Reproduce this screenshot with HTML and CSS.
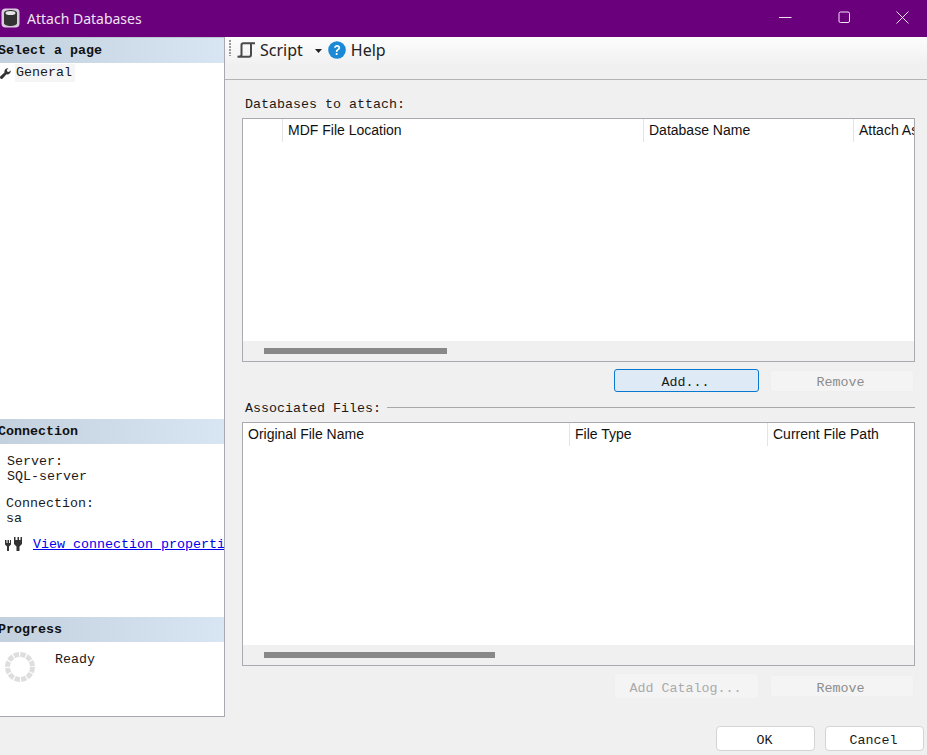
FILE: index.html
```html
<!DOCTYPE html>
<html lang="en">
<head>
<meta charset="utf-8">
<title>Attach Databases</title>
<link rel="stylesheet" href="styles.css">
</head>
<body>
<div class="window">
  <header class="titlebar">
    <svg class="app-icon" width="19" height="20" viewBox="0 0 19 20">
      <rect x="0.5" y="0.5" width="18" height="19" rx="4" fill="#d9cbdd"/>
      <path d="M3 5c0-4 13-4 13 0v10c0 4-13 4-13 0z" fill="#333"/>
      <ellipse cx="9.500" cy="5" rx="5" ry="2" fill="#e6e6e6"/>
    </svg>
    <span class="title">Attach Databases</span>
    <div class="win-controls">
      <span class="win-btn"><svg width="13" height="13" viewBox="0 0 13 13"><path d="M0 6.500h12.500" stroke="#f2e6f4" stroke-width="1"/></svg></span>
      <span class="win-btn"><svg width="13" height="13" viewBox="0 0 13 13"><rect x="1" y="1" width="10.500" height="10.500" rx="1.500" fill="none" stroke="#f2e6f4" stroke-width="1"/></svg></span>
      <span class="win-btn"><svg width="13" height="13" viewBox="0 0 13 13"><path d="M0.500 0.500l12 12M12.500 0.500l-12 12" stroke="#f2e6f4" stroke-width="1"/></svg></span>
    </div>
  </header>
  <div class="body">
    <aside class="side">
      <section class="side-sec sec-pages">
        <h2 class="sec-head">Select a page</h2>
        <div class="page-row">
          <svg class="wrench" width="11" height="11" viewBox="0 0 11 11"><path d="M10.800 2.400a3.600 3.600 0 0 1-4.300 3.900L2.700 10.500a1.600 1.600 0 0 1-2.300-2.200L4.500 4.500A3.600 3.600 0 0 1 8.400 0.200L6.800 2.100l0.400 1.500 1.500 0.400z" fill="#333"/></svg>
          <span class="page-name">General</span>
        </div>
      </section>
      <section class="side-sec sec-conn">
        <h2 class="sec-head">Connection</h2>
        <div class="conn-block first">Server:<br>SQL-server</div>
        <div class="conn-block second">Connection:<br>sa</div>
        <div class="conn-link">
          <svg class="plug" width="19" height="16" viewBox="0 0 19 16"><path d="M1 4h1.500v3h1V4H5v3h1V4h1v4.500L5 10.500V15H3v-4.500L1 8.500zM10 1h1.500v3h2V1H15v3h1.500V1H18v7l-2.500 2.500V15h-3v-4.500L10 8z" fill="#333"/></svg>
          <a href="#" class="link">View connection properties</a>
        </div>
      </section>
      <section class="side-sec sec-prog">
        <h2 class="sec-head">Progress</h2>
        <div class="prog-row">
          <svg class="spinner" width="30" height="30" viewBox="0 0 30 30"><circle cx="15" cy="15" r="12.500" fill="none" stroke="#dedede" stroke-width="5" stroke-dasharray="5.300 1.240"/></svg>
          <span class="ready">Ready</span>
        </div>
      </section>
    </aside>
    <main class="main">
      <div class="toolbar">
        <span class="grip"></span>
        <svg class="script-icon" width="18" height="16" viewBox="0 0 18 16"><path d="M4.500 13V3C4.500 1.800 5.300 1.200 6.500 1.200H18M14 1.200V12.500C14 14 13.200 14.800 12 14.800H0.500C2 14.800 4.500 14.500 4.500 13" fill="none" stroke="#4a4a4a" stroke-width="2"/></svg>
        <span class="tool-text">Script</span>
        <svg class="caret" width="7" height="4" viewBox="0 0 7 4"><path d="M0 0h7L3.500 4z" fill="#222"/></svg>
        <svg class="help-icon" width="18" height="18" viewBox="0 0 19 19"><circle cx="9.500" cy="9.500" r="9.300" fill="#1b8ad6"/><path d="M6.500 7.200c0-4 6.300-3.700 6.300 0 0 2.500-2.800 2.400-2.800 4.300H8.300c0-3 2.700-2.900 2.700-4.400 0-1.500-2.700-1.500-2.700 0.100zM8.200 12.700H10v2H8.200z" fill="#fff"/></svg>
        <span class="tool-text">Help</span>
      </div>
      <div class="content">
        <div class="label">Databases to attach:</div>
        <div class="grid grid-top">
          <div class="grid-head">
            <span class="col c-check"></span>
            <span class="col c-mdf">MDF File Location</span>
            <span class="col c-dbname">Database Name</span>
            <span class="col c-attach">Attach As</span>
          </div>
          <div class="grid-rows"></div>
          <div class="hscroll"><span class="thumb thumb-top"></span></div>
        </div>
        <div class="btn-row row-add">
          <button class="btn btn-active">Add...</button>
          <button class="btn btn-disabled btn-remove">Remove</button>
        </div>
        <div class="assoc-label">
          <span class="label">Associated Files:</span>
          <span class="rule"></span>
        </div>
        <div class="grid grid-bottom">
          <div class="grid-head">
            <span class="col c-orig">Original File Name</span>
            <span class="col c-type">File Type</span>
            <span class="col c-path">Current File Path</span>
          </div>
          <div class="grid-rows"></div>
          <div class="hscroll"><span class="thumb thumb-bottom"></span></div>
        </div>
        <div class="btn-row row-catalog">
          <button class="btn btn-disabled btn-catalog">Add Catalog...</button>
          <button class="btn btn-disabled btn-remove">Remove</button>
        </div>
      </div>
      <div class="footer">
        <button class="btn btn-plain">OK</button>
        <button class="btn btn-plain">Cancel</button>
      </div>
    </main>
  </div>
</div>
</body>
</html>
```

FILE: styles.css
```css
* { box-sizing: border-box; }
html, body { margin: 0; padding: 0; height: 100%; overflow: hidden; }
body { background: #f0f0f0; font-family: "Liberation Mono", monospace; font-size: 13.33px; color: #1a1a1a; }
.window { width: 927px; height: 755px; display: flex; flex-direction: column; overflow: hidden; }

.titlebar { height: 37px; flex: none; background: #6a007c; display: flex; align-items: center; padding-left: 1px; padding-bottom: 1px; }
.app-icon { flex: none; }
.title { margin-left: 7px; font-family: "Noto Sans", sans-serif; font-size: 14px; color: #efe3f2; }
.win-controls { margin-left: auto; display: flex; margin-right: -5px; padding-bottom: 2px; }
.win-btn { width: 58.500px; height: 30px; display: flex; align-items: center; justify-content: center; }

.body { flex: 1; display: flex; min-height: 0; }
.side { width: 225px; height: 680px; flex: none; background: #fff; border-right: 1px solid #a9a9b0; border-bottom: 1px solid #a9a9b0; display: flex; flex-direction: column; overflow: hidden; }
.side-sec { flex: none; }
.sec-pages { height: 382px; }
.sec-conn { height: 198px; }
.sec-prog { flex: 1; }
.sec-head { margin: 0; height: 25px; padding-left: 0; font-size: 13.33px; font-weight: bold; line-height: 25px; text-indent: -2px; color: #111; background: linear-gradient(90deg, #c3d1df, #d8e5f2); white-space: nowrap; }
.sec-pages .sec-head { height: 26px; line-height: 26px; border-top: 1px solid #bcc6d2; }

.page-row { display: flex; align-items: center; height: 18px; margin-top: 1px; }
.wrench { margin-left: 0; flex: none; }
.page-name { margin-left: 4px; padding: 0 3px 0 1px; height: 18px; line-height: 18px; background: #f5f5f5; }

.conn-block { line-height: 15px; margin-left: 7px; }
.conn-block.first { margin-top: 10px; }
.conn-block.second { margin-top: 12px; margin-left: 6px; }
.conn-link { display: flex; align-items: center; margin-top: 9px; margin-left: 4px; white-space: nowrap; height: 18px; }
.plug { flex: none; }
.link { margin-left: 10px; color: #0000ee; text-decoration: underline; }

.prog-row { display: flex; align-items: flex-start; padding: 10px 0 0 5px; }
.ready { margin-left: 20px; line-height: 15px; }
.spinner { flex: none; }

.main { flex: 1; min-width: 0; display: flex; flex-direction: column; }
.toolbar { height: 43px; flex: none; border-bottom: 1px solid #b4b4b4; background: linear-gradient(#fdfdfd, #f0f0f0 70%); display: flex; align-items: flex-start; padding-left: 4px; padding-top: 3px; }
.grip { width: 2px; height: 16px; background: repeating-linear-gradient(#999 0 2px, transparent 2px 3px); flex: none; }
.script-icon { margin-left: 6px; margin-top: 2px; flex: none; }
.tool-text { font-family: "Noto Sans", sans-serif; font-size: 16px; line-height: 21px; margin-left: 5px; color: #222; }
.caret { margin-left: 12px; margin-top: 9px; flex: none; }
.help-icon { margin-left: 6px; margin-top: 1px; flex: none; }
.tool-text:last-child { margin-left: 5px; }

.content { padding: 16px 12px 0 17px; display: flex; flex-direction: column; }
.label { line-height: 16px; margin-left: 3px; position: relative; top: 1px; }
.grid { background: #fff; border: 1px solid #a9a9b0; display: flex; flex-direction: column; overflow: hidden; height: 244px; }
.grid-top { margin-top: 6px; }
.grid-bottom { margin-top: 7px; }
.grid-head { height: 23px; flex: none; display: flex; font-family: "Liberation Sans", sans-serif; font-size: 14px; white-space: nowrap; }
.col { display: block; flex: none; line-height: 23px; height: 23px; padding-left: 5px; border-right: 1px solid #e4e4e4; overflow: hidden; color: #111; }
.c-check { width: 40px; }
.c-mdf { width: 361px; }
.c-dbname { width: 210px; }
.c-attach { width: 60px; border-right: 0; }
.c-orig { width: 327px; }
.c-type { width: 198px; }
.c-path { width: 145px; border-right: 0; }
.grid-rows { flex: 1; }
.hscroll { height: 20px; flex: none; background: #f0f0f0; display: flex; align-items: center; padding-left: 21px; }
.thumb { height: 6px; background: #888; display: block; }
.thumb-top { width: 183px; }
.thumb-bottom { width: 231px; }

.btn { font-family: "Liberation Mono", monospace; font-size: 13.33px; padding: 3px 2px 0 0; color: #1a1a1a; border-radius: 3px; display: block; }
.btn-row { display: flex; justify-content: flex-end; align-items: center; gap: 11px; padding-right: 1px; }
.row-add { margin-top: 7px; height: 23px; }
.row-catalog { margin-top: 7px; height: 26px; }
.btn-active { width: 145px; height: 23px; background: #deebf7; border: 1px solid #0a78d0; }
.btn-disabled { background: #f4f4f4; border: 1px solid #efefef; color: #8c8c8c; }
.btn-remove { width: 144px; height: 22px; padding-right: 3px; }
.row-catalog .btn { padding-top: 5px; }
.btn-catalog { width: 145px; height: 26px; color: #aaa; }
.assoc-label { display: flex; align-items: center; margin-top: 8px; height: 15px; }
.rule { flex: 1; height: 1px; background: #a9a9a9; margin-left: 6px; }
.footer { display: flex; justify-content: flex-end; gap: 10px; padding-right: 3px; margin-top: 27px; }
.btn-plain { width: 99px; height: 25px; background: #fff; border: 1px solid #d4d4d4; border-radius: 4px; }
```
